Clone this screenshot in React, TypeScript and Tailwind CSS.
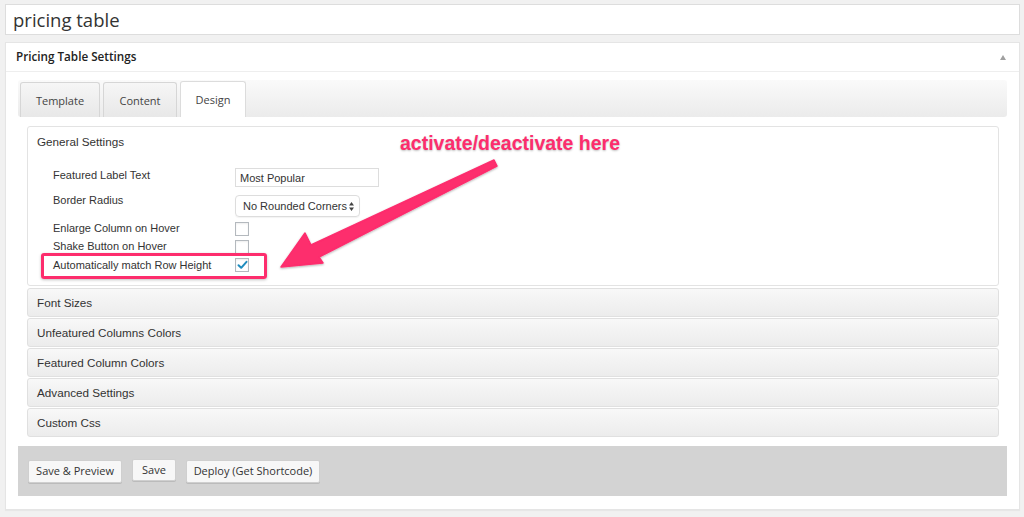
import React from 'react';

const sans = { fontFamily: '"Liberation Sans", Arial, sans-serif' };
const open = { fontFamily: '"Open Sans", "Liberation Sans", sans-serif' };

const tabs = [
  { name: 'Template', w: 'w-[80px]', active: false },
  { name: 'Content', w: 'w-[74px]', active: false },
  { name: 'Design', w: 'w-[66px]', active: true },
];

const sections = ['Font Sizes', 'Unfeatured Columns Colors', 'Featured Column Colors', 'Advanced Settings', 'Custom Css'];

function Checkbox({ checked }: { checked?: boolean }) {
  return (
    <div className="w-[14px] h-[14px] border border-[#b4b9be] bg-white shadow-[inset_0_1px_2px_rgba(0,0,0,0.07)] flex items-center justify-center">
      {checked && (
        <svg width="11" height="10" viewBox="0 0 11 10">
          <path d="M1.5 5.2 L4.2 7.8 L9.5 1.8" fill="none" stroke="#1e8cbe" strokeWidth="2" strokeLinecap="round" strokeLinejoin="round" />
        </svg>
      )}
    </div>
  );
}

export default function App() {
  return (
    <div className="relative w-[1024px] h-[517px] bg-[#f1f1f1] overflow-hidden pl-[5px] pr-[4px] pt-[4px]" style={sans}>
      {/* title */}
      <div className="h-[31px] border border-[#dddddd] bg-white flex items-center pl-[7px] text-[18.5px] text-[#333]" style={open}>
        pricing table
      </div>

      {/* settings panel */}
      <div className="mt-[7px] h-[468px] border border-[#e5e5e5] bg-white shadow-[0_1px_1px_rgba(0,0,0,0.04)]">
        <div className="h-[29px] border-b border-[#eeeeee] flex items-center justify-between pl-[10px] pr-[13px]">
          <span className="text-[11.7px] font-semibold text-[#222]" style={open}>Pricing Table Settings</span>
          <div className="w-0 h-0 border-l-[3.5px] border-r-[3.5px] border-b-[5px] border-l-transparent border-r-transparent border-b-[#a0a0a0]" />
        </div>

        <div className="px-[12px] pt-[8px]">
          {/* tab bar */}
          <div className="h-[37px] rounded-[3px] bg-gradient-to-b from-[#fafafa] to-[#ebebeb] flex items-end gap-[3px] pl-[2px]">
            {tabs.map(t => (
              <div
                key={t.name}
                className={`${t.w} rounded-t-[3px] border border-b-0 flex items-center justify-center pt-[2px] text-[11px] text-[#444] ${
                  t.active ? 'bg-white border-[#dcdcdc] h-[36px]' : 'h-[35px] bg-gradient-to-b from-[#f6f6f6] to-[#e8e8e8] border-[#d6d6d6]'
                }`}
                style={open}
              >
                {t.name}
              </div>
            ))}
          </div>

          <div className="px-[9px] pr-[8px] pt-[9px]">
            {/* general settings */}
            <div className="h-[160px] border border-[#e3e3e3] rounded-[3px] bg-white">
              <div className="h-[29px] flex items-center pl-[9px] text-[11.7px] text-[#333]">General Settings</div>
              <div className="pl-[25px] pt-[12px] text-[11px] text-[#333] leading-[14px]">
                <div className="flex items-start h-[18px]">
                  <span className="w-[182px]">Featured Label Text</span>
                  <div className="w-[144px] h-[19px] border border-[#dddddd] flex items-center pl-[4px] text-[11px]">Most Popular</div>
                </div>
                <div className="flex items-start mt-[9px] h-[21px]">
                  <span className="w-[182px] -mt-[2px]">Border Radius</span>
                  <div className="w-[125px] h-[22px] border border-[#dddddd] rounded-[4px] flex items-center justify-between pl-[7px] pr-[5px] shadow-[0_1px_1px_rgba(0,0,0,0.05)]">
                    <span>No Rounded Corners</span>
                    <svg width="5" height="9" viewBox="0 0 5 9"><path d="M0 3.5 L2.5 0 L5 3.5Z M0 5.5 L2.5 9 L5 5.5Z" fill="#444" /></svg>
                  </div>
                </div>
                <div className="flex items-start mt-[6px]">
                  <span className="w-[182px] -mt-[1px]">Enlarge Column on Hover</span>
                  <Checkbox />
                </div>
                <div className="flex items-start mt-[4px]">
                  <span className="w-[182px] -mt-[1px]">Shake Button on Hover</span>
                  <Checkbox />
                </div>
                <div className="flex items-start mt-[4px]">
                  <span className="w-[182px]">Automatically match Row Height</span>
                  <Checkbox checked />
                </div>
              </div>
            </div>

            {/* collapsed sections */}
            {sections.map((s, i) => (
              <div
                key={s}
                className={`h-[29px] ${i === 0 ? 'mt-[2px]' : 'mt-[1px]'} border border-[#e0e0e0] rounded-[3px] bg-gradient-to-b from-[#f8f8f8] to-[#ececec] flex items-center pl-[9px] text-[11.7px] text-[#333]`}
              >
                {s}
              </div>
            ))}
          </div>

          {/* action bar */}
          <div className="mt-[9px] h-[50px] bg-[#d3d3d3] flex items-center gap-[10px] pl-[10px]" style={open}>
            <div className="w-[94px] h-[23px] bg-[#f7f7f7] border border-[#cfcfcf] rounded-[2px] shadow-[0_1px_0_#bbb] flex items-center justify-center text-[11px] text-[#333]">Save &amp; Preview</div>
            <div className="w-[44px] h-[22px] -mt-[2px] bg-[#f7f7f7] border border-[#cfcfcf] rounded-[2px] shadow-[0_1px_0_#bbb] flex items-center justify-center text-[11px] text-[#333]">Save</div>
            <div className="w-[134px] h-[23px] bg-[#f7f7f7] border border-[#cfcfcf] rounded-[2px] shadow-[0_1px_0_#bbb] flex items-center justify-center text-[11px] text-[#333]">Deploy (Get Shortcode)</div>
          </div>
        </div>
      </div>

      {/* annotation overlay */}
      <div className="absolute left-[41px] top-[253px] w-[226px] h-[26px] border-[3px] border-[#fd2d6d] rounded-[3px] shadow-[0_1px_3px_rgba(0,0,0,0.25)]" />
      <div
        className="absolute left-[400px] top-[130px] text-[19.5px] font-bold text-[#fd2d6d] whitespace-nowrap leading-[26px]"
        style={{ ...sans, textShadow: '0 1px 2px rgba(0,0,0,0.25), 0 0 2px #fff' }}
      >
        activate/deactivate here
      </div>
      <svg className="absolute left-0 top-0 pointer-events-none" width="1024" height="517" viewBox="0 0 1024 517">
        <defs>
          <filter id="sh" x="-10%" y="-10%" width="120%" height="130%">
            <feDropShadow dx="0" dy="1" stdDeviation="1.2" floodColor="#000" floodOpacity="0.3" />
          </filter>
        </defs>
        <polygon
          points="281,267 305,233 311,245 494,160 497,166 319,257 323,263"
          fill="#fd2d6d"
          stroke="#fd2d6d"
          strokeWidth="1.5"
          strokeLinejoin="round"
          filter="url(#sh)"
        />
      </svg>
    </div>
  );
}
